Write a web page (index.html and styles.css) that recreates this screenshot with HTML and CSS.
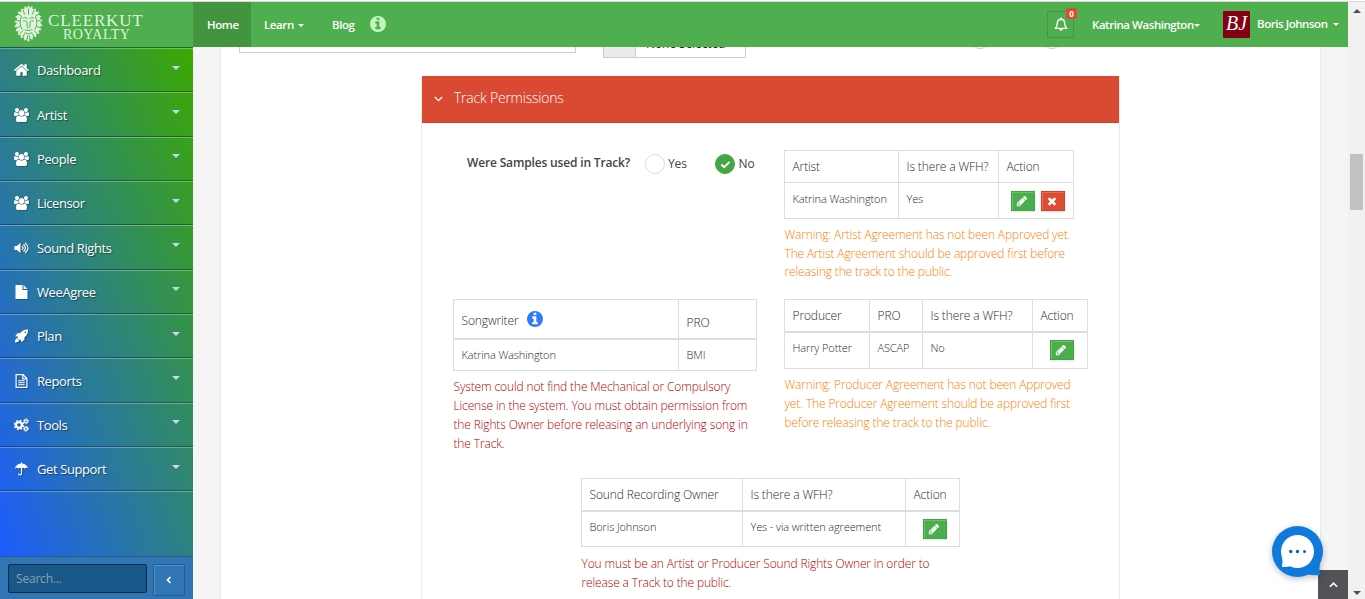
FILE: index.html
```html
<!DOCTYPE html>
<html lang="en">
<head>
<meta charset="utf-8">
<title>Cleerkut Royalty</title>
<link rel="stylesheet" href="styles.css">
</head>
<body>
<svg class="defs" width="0" height="0">
  <symbol id="home" viewBox="70 200 1650 1400"><path d="M1472 992v480q0 26-19 45t-45 19h-384v-384h-256v384h-384q-26 0-45-19t-19-45v-480q0-1 .5-3t.5-3l575-474 575 474q1 2 1 6zm223-69l-62 74q-8 9-21 11h-3q-13 0-21-7l-692-577-692 577q-12 8-24 7-13-2-21-11l-62-74q-8-10-7-23.5t11-21.5l719-599q32-26 76-26t76 26l244 204v-195q0-14 9-23t23-9h192q14 0 23 9t9 23v408l219 182q10 8 11 21.5t-7 23.5z"/></symbol>
  <symbol id="users" viewBox="0 0 1920 1792"><path d="M593 896q-162 5-265 128h-134q-82 0-138-40.5t-56-118.5q0-353 124-353 6 0 43.5 21t97.5 42.5 119 21.5q67 0 133-23-5 37-5 66 0 139 81 256zm1071 637q0 120-73 189.5t-194 69.5h-874q-121 0-194-69.5t-73-189.5q0-53 3.5-103.5t14-109 26.5-108.5 43-97.5 62-81 85.5-53.5 111.5-20q10 0 43 21.5t73 48 107 48 135 21.5 135-21.5 107-48 73-48 43-21.5q61 0 111.5 20t85.5 53.5 62 81 43 97.5 26.5 108.5 14 109 3.5 103.5zm-1024-1277q0 106-75 181t-181 75-181-75-75-181 75-181 181-75 181 75 75 181zm704 384q0 159-112.5 271.5t-271.5 112.5-271.5-112.5-112.5-271.5 112.5-271.5 271.5-112.5 271.5 112.5 112.5 271.5zm576 225q0 78-56 118.5t-138 40.5h-134q-103-123-265-128 81-117 81-256 0-29-5-66 66 23 133 23 59 0 119-21.5t97.5-42.5 43.5-21q124 0 124 353zm-128-609q0 106-75 181t-181 75-181-75-75-181 75-181 181-75 181 75 75 181z"/></symbol>
  <symbol id="volume" viewBox="0 0 14 14"><path d="M0 5h2.300L6 2v10L2.300 9H0z"/><path d="M7.500 5.200q2 1.800 0 3.600M9 3.500q4 3.500 0 7M10.500 1.900q6 5.100 0 10.200" fill="none" stroke="currentColor" stroke-width="1.200"/></symbol>
  <symbol id="file" viewBox="0 0 14 14"><path d="M1 .6Q1 0 1.600 0H8v4.400q0 .6.600.6H13v8.400q0 .6-.6.6H1.600Q1 14 1 13.400zM9 .1l3.900 3.900H9z"/></symbol>
  <symbol id="filetext" viewBox="0 0 14 14"><path d="M1.600.6H8.500l3.900 3.900v8.900H1.600zM8.300.8v4h4" fill="none" stroke="currentColor" stroke-width="1.200"/><path d="M3.800 6.300h6.400v1H3.800zm0 2h6.400v1H3.800zm0 2h6.400v1H3.800z"/></symbol>
  <symbol id="rocket" viewBox="0 0 14 14"><path fill-rule="evenodd" d="M13.500.500Q9-.1 5.800 4L3 4.200 0.700 7.300l2.900.2-.8 1.300 2.400 2.400 1.300-.8.200 2.900 3.100-2.300.2-2.800Q14.100 5 13.500.500zM10.700 2.500a.8.800 0 1 1 0 1.600.8.800 0 1 1 0-1.600zM2.500 9.200Q.5 10 .4 13.600 4 13.500 4.800 11.500z"/></symbol>
  <symbol id="cogs" viewBox="0 0 15 14"><g fill="none" stroke="currentColor"><circle cx="5" cy="7" r="2.900" stroke-width="2.200"/><circle cx="5" cy="7" r="4.500" stroke-width="1.400" stroke-dasharray="2 1.530"/><circle cx="12" cy="3.300" r="1.500" stroke-width="1.300"/><circle cx="12" cy="3.300" r="2.500" stroke-width=".9" stroke-dasharray="1.200 .76"/><circle cx="12" cy="10.800" r="1.500" stroke-width="1.300"/><circle cx="12" cy="10.800" r="2.500" stroke-width=".9" stroke-dasharray="1.200 .76"/></g></symbol>
  <symbol id="umbrella" viewBox="0 0 14 14"><path d="M6.500 1.500V.8q0-.5.5-.5t.5.500v.7q4.800.5 6.200 5.200-2-1.800-3.500 0Q8.600 5 7 6.700 5.400 5 3.800 6.700q-1.500-1.800-3.500 0Q1.700 2 6.500 1.500z"/><path d="M7 6v5.300q0 1.700-1.500 1.700T4 11.400" fill="none" stroke="currentColor" stroke-width="1.200"/></symbol>
  <symbol id="info" viewBox="128 128 1536 1536"><path d="M1152 1376v-160q0-14-9-23t-23-9h-96v-512q0-14-9-23t-23-9h-320q-14 0-23 9t-9 23v160q0 14 9 23t23 9h96v320h-96q-14 0-23 9t-9 23v160q0 14 9 23t23 9h448q14 0 23-9t9-23zm-128-896v-160q0-14-9-23t-23-9h-192q-14 0-23 9t-9 23v160q0 14 9 23t23 9h192q14 0 23-9t9-23zm640 416q0 209-103 385.5t-279.5 279.5-385.5 103-385.5-103-279.5-279.5-103-385.5 103-385.5 279.5-279.5 385.5-103 385.5 103 279.5 279.5 103 385.5z"/></symbol>
  <symbol id="pencil" viewBox="0 0 1792 1792"><path d="M491 1536l91-91-235-235-91 91v107h128v128h107zm523-928q0-22-22-22-10 0-17 7l-542 542q-7 7-7 17 0 22 22 22 10 0 17-7l542-542q7-7 7-17zm-54-192l416 416-832 832h-416v-416zm683 96q0 53-37 90l-166 166-416-416 166-165q36-38 90-38 53 0 91 38l235 234q37 39 37 91z"/></symbol>
  <symbol id="times" viewBox="0 0 1792 1792"><path d="M1490 1322q0 40-28 68l-136 136q-28 28-68 28t-68-28l-294-294-294 294q-28 28-68 28t-68-28l-136-136q-28-28-28-68t28-68l294-294-294-294q-28-28-28-68t28-68l136-136q28-28 68-28t68 28l294 294 294-294q28-28 68-28t68 28l136 136q28 28 28 68t-28 68l-294 294 294 294q28 28 28 68z"/></symbol>
</svg>
<div class="page">
  <div class="app">
    <header class="topbar">
      <a class="brand">
        <svg class="lion" viewBox="0 0 32 40">
          <path fill="currentColor" d="M16 0l1.500 3 2.500-2 .5 3.500L24 4l-.5 3 4 0-1.500 3 4 2-2.500 1.500L31 17l-3 1 3 4-3 .5 1.500 4-3 0 1 4-3-.5-.5 4-3-1-1 3.500-2-1L16 39l-2-2.500-2 1-1-3.500-3 1-.5-4-3 .5 1-4-3 0 1.500-4-3-.5 3-4-3-1 3.500-3.500L2 12l4-2-1.500-3 4 0L8 4l3.500.5L12 1l2.500 2z"/>
          <g fill="none" stroke="#4fae4e" stroke-width="1">
            <path d="M10 14q2.500-2 5 .5M22 14q-2.500-2-5 .5M10.500 17q2.500-1.500 4 .8M21.500 17q-2.500-1.500-4 .8M14.500 18v5l1.500 1.500 1.500-1.500v-5M12 26q4 2 8 0M12 29q4 3 8 0M8.500 12q-3 8 1 14M23.500 12q3 8-1 14M4 9l5 3M28 9l-5 3M3 16l4 1M29 16l-4 1M4 24l4-2M28 24l-4-2M7 30l3-3M25 30l-3-3M10 5l2 5M22 5l-2 5M16 4v6M10 34l2-4M22 34l-2-4M14.500 37l.5-5M17.500 37l-.5-5"/>
          </g>
        </svg>
        <span class="brand-text"><span class="b1">CLEERKUT</span><span class="b2">ROYALTY</span></span>
      </a>
      <nav class="nav">
        <a class="nav-item active">Home</a>
        <a class="nav-item">Learn <i class="caret"></i></a>
        <a class="nav-item">Blog</a>
        <svg class="nav-info"><use href="#info"/></svg>
      </nav>
      <div class="account">
        <span class="bell">
          <svg viewBox="0 0 14 15"><path d="M1.200 11.400Q3.400 9.300 3.400 5.800 3.500 2.500 7 2.300q3.500.2 3.600 3.500 0 3.500 2.200 5.600z" fill="none" stroke="#fff" stroke-width="1.400" stroke-linejoin="round"/><path d="M6.300.6h1.400v2H6.300zM5.200 12h3.600Q8.600 13.800 7 13.800T5.200 12z" fill="#fff"/></svg>
          <span class="badge">0</span>
        </span>
        <a class="user1">Katrina Washington<i class="caret"></i></a>
        <span class="avatar">BJ</span>
        <a class="user2">Boris Johnson <i class="caret"></i></a>
      </div>
    </header>
    <div class="columns">
      <aside class="sidebar">
        <ul class="menu">
          <li><svg><use href="#home"/></svg><span>Dashboard</span><i class="caret"></i></li>
          <li><svg><use href="#users"/></svg><span>Artist</span><i class="caret"></i></li>
          <li><svg><use href="#users"/></svg><span>People</span><i class="caret"></i></li>
          <li><svg><use href="#users"/></svg><span>Licensor</span><i class="caret"></i></li>
          <li><svg><use href="#volume"/></svg><span>Sound Rights</span><i class="caret"></i></li>
          <li><svg><use href="#file"/></svg><span>WeeAgree</span><i class="caret"></i></li>
          <li><svg><use href="#rocket"/></svg><span>Plan</span><i class="caret"></i></li>
          <li><svg><use href="#filetext"/></svg><span>Reports</span><i class="caret"></i></li>
          <li><svg><use href="#cogs"/></svg><span>Tools</span><i class="caret"></i></li>
          <li><svg><use href="#umbrella"/></svg><span>Get Support</span><i class="caret"></i></li>
        </ul>
        <div class="side-foot">
          <div class="search">Search...</div>
          <div class="collapse"><svg viewBox="0 0 6 8"><path d="M4.500 1L1.500 4l3 3" fill="none" stroke="#fff" stroke-width="1.700"/></svg></div>
        </div>
      </aside>
      <main class="content">
        <div class="fields">
          <div class="field-input"></div>
          <div class="field-select"><span class="addon"></span><span class="value">None Selected</span></div>
          <span class="mini-radio first"></span><span class="mini-radio"></span>
        </div>
        <section class="card">
          <h2 class="card-head"><svg viewBox="0 0 9 6"><path d="M.8 1l3.700 3.700L8.200 1" fill="none" stroke="#fff" stroke-width="1.300"/></svg><span>Track Permissions</span></h2>
          <div class="card-body">
            <div class="question">
              <span class="q-label">Were Samples used in Track?</span>
              <label class="opt"><span class="radio"></span>Yes</label>
              <label class="opt no"><span class="radio on"><svg viewBox="0 0 12 10"><path d="M1.500 5l3 3 6-6" fill="none" stroke="#fff" stroke-width="2"/></svg></span>No</label>
            </div>
            <div class="block">
              <table class="grid t-artist">
                <colgroup><col class="w114"><col class="w100"><col class="w75"></colgroup>
                <tr><th>Artist</th><th>Is there a WFH?</th><th>Action</th></tr>
                <tr><td>Katrina Washington</td><td>Yes</td><td class="act two"><span class="btn"><svg><use href="#pencil"/></svg></span><span class="btn red"><svg><use href="#times"/></svg></span></td></tr>
              </table>
              <p class="note warn">Warning: Artist Agreement has not been Approved yet.<br>The Artist Agreement should be approved first before<br>releasing the track to the public.</p>
            </div>
            <div class="block">
              <table class="grid thick t-song">
                <colgroup><col class="w225"><col class="w78"></colgroup>
                <tr><th class="mid">Songwriter <svg class="th-info"><use href="#info"/></svg></th><th class="low">PRO</th></tr>
                <tr><td>Katrina Washington</td><td>BMI</td></tr>
              </table>
              <p class="note error tight">System could not find the Mechanical or Compulsory<br>License in the system. You must obtain permission from<br>the Rights Owner before releasing an underlying song in<br>the Track.</p>
            </div>
            <div class="block">
              <table class="grid thick t-prod">
                <colgroup><col class="w85"><col class="w53"><col class="w110"><col class="w55"></colgroup>
                <tr><th>Producer</th><th>PRO</th><th>Is there a WFH?</th><th>Action</th></tr>
                <tr><td>Harry Potter</td><td>ASCAP</td><td>No</td><td class="act"><span class="btn"><svg><use href="#pencil"/></svg></span></td></tr>
              </table>
              <p class="note warn tight">Warning: Producer Agreement has not been Approved<br>yet. The Producer Agreement should be approved first<br>before releasing the track to the public.</p>
            </div>
            <div class="block wide">
              <table class="grid thick t-sound">
                <colgroup><col class="w161"><col class="w163"><col class="w54"></colgroup>
                <tr><th>Sound Recording Owner</th><th>Is there a WFH?</th><th>Action</th></tr>
                <tr><td>Boris Johnson</td><td>Yes - via written agreement</td><td class="act"><span class="btn"><svg><use href="#pencil"/></svg></span></td></tr>
              </table>
              <p class="note error">You must be an Artist or Producer Sound Rights Owner in order to<br>release a Track to the public.</p>
            </div>
          </div>
        </section>
      </main>
    </div>
  </div>
  <div class="scrollbar"><i class="up"></i><i class="thumb"></i><i class="down"></i></div>
</div>
<div class="to-top"><svg viewBox="0 0 10 6"><path d="M1 5l4-4 4 4" fill="none" stroke="#fff" stroke-width="1.800"/></svg></div>
<svg class="chat" viewBox="0 0 60 60"><circle cx="29.500" cy="29.500" r="25.500" fill="#107adc"/><path d="M52 40q-1 7 0 13-7 1-13-1z" fill="#107adc"/><circle cx="29.500" cy="29.500" r="16.500" fill="#fff"/><path d="M14 34q1 6 0 11 6 0 10-1z" fill="#fff"/><g fill="#0e63ad"><circle cx="22.800" cy="29.500" r="1.700"/><circle cx="29.500" cy="29.500" r="1.700"/><circle cx="36.500" cy="29.500" r="1.500"/></g></svg>
</body>
</html>
```
FILE: styles.css
```css
* { box-sizing: border-box; }
body { margin: 0; height: 599px; overflow: hidden; background: #fff; font-family: "Open Sans", sans-serif; font-size: 13px; color: #444; }
.defs { position: absolute; }
svg { fill: currentColor; flex: none; display: block; }
.page { display: flex; height: 599px; padding-top: 2px; background: linear-gradient(#fff 0 1px, #d9d9d9 1px 2px) 0 0 / 100% 2px no-repeat; }
.app { width: 1348px; display: flex; flex-direction: column; }

.topbar { height: 45px; flex: none; display: flex; background: #4fae4e; color: #fff; position: relative; z-index: 2; font-size: 12px; font-weight: 600; }
.brand { width: 193px; display: flex; padding: 3px 0 0 12px; color: #dff3dc; font-family: "Liberation Serif", serif; font-weight: 400; }
.lion { width: 33px; height: 38px; }
.brand-text { display: flex; flex-direction: column; padding: 8px 0 0 3px; }
.b1 { font-size: 17px; line-height: 16px; letter-spacing: .85px; white-space: nowrap; }
.b2 { font-size: 14px; line-height: 12px; letter-spacing: .45px; padding-left: 15px; }
.nav { display: flex; flex: 1; line-height: 46px; font-size: 11.500px; letter-spacing: -.4px; }
.nav-item { width: 58px; padding-left: 14px; white-space: nowrap; }
.nav-item.active { background: #43943f; }
.nav-item:nth-child(2) { width: 67px; padding-left: 13px; }
.nav-item:nth-child(3) { width: 52px; }
.nav-item .caret { margin-left: 2px; }
.nav-info { width: 16px; height: 16px; margin-top: 14px; color: #c1f7bd; }
.caret { display: inline-block; border: 3px solid transparent; border-top-color: currentColor; border-bottom: 0; vertical-align: 2px; }
.account { display: flex; }
.bell { width: 27px; height: 27px; margin-top: 9px; border: 1px solid #419841; position: relative; padding: 5px 6px; }
.bell svg { width: 14px; height: 15px; }
.badge { position: absolute; left: 18px; top: -4px; width: 11px; height: 11px; border-radius: 2px; background: #e04b34; font-size: 8px; line-height: 11px; font-weight: 700; text-align: center; }
.user1 { margin-left: 18px; width: 131px; line-height: 46px; white-space: nowrap; letter-spacing: -.45px; font-size: 11.500px; }
.user2 { margin-left: 7px; width: 91px; line-height: 44px; white-space: nowrap; font-size: 11.500px; letter-spacing: -.45px; }
.user2 .caret { margin-left: 3px; }
.avatar { width: 27px; height: 27px; margin-top: 9px; border-radius: 1px; background: #850014; font: italic 400 20px/25px "Liberation Serif", serif; text-align: center; }

.columns { flex: 1; display: flex; min-height: 0; background: #f5f5f5; overflow: hidden; }
.sidebar { width: 193px; display: flex; flex-direction: column; }
.menu { margin: 0; padding: 0; list-style: none; flex: 1; background: linear-gradient(to top right, #1e5bff, #3ca900); }
.menu li { height: 44.350px; border-top: 1px solid rgba(0,40,50,.48); box-shadow: inset 0 1px rgba(255,255,255,.3); display: flex; align-items: center; padding: 1px 13px 0 14px; color: #fff; font-size: 13px; letter-spacing: -.4px; text-shadow: 1px 1px 1px rgba(0,0,0,.45); }
.menu li:last-child { height: 45.350px; border-bottom: 1px solid rgba(0,40,50,.48); box-shadow: inset 0 1px rgba(255,255,255,.3), 0 1px rgba(255,255,255,.3); }
.menu svg { width: 15px; height: 14px; margin-right: 8px; filter: drop-shadow(1px 1px 0 rgba(0,0,0,.25)); }
.menu .caret { margin: 0 0 5px auto; border-width: 4px; border-bottom: 0; border-top-color: #c9d3f5; }
.side-foot { height: 43px; background: #3176b4; border-top: 1px solid #265b87; display: flex; gap: 6px; padding: 7px 0 0 8px; }
.search { width: 139px; height: 29px; background: #1a5789; border: 1px solid #0c2b47; border-radius: 2px; padding-left: 7px; line-height: 28px; font-size: 12px; letter-spacing: -.2px; color: #8ea3ac; }
.collapse { width: 32px; height: 32px; border: 1px solid #255c8d; border-radius: 1px; box-shadow: inset 1px 1px rgba(255,255,255,.18); display: grid; place-items: center; }
.collapse svg { width: 6px; height: 8px; }

.content { width: 1101px; margin-left: 27px; background: #fff; border: solid #ebebeb; border-width: 0 1px; overflow: hidden; }
.fields { display: flex; align-items: flex-start; height: 58px; margin-top: -29px; padding-left: 18px; }
.field-input { width: 337px; height: 35px; border: 1px solid #ccc; }
.field-select { width: 143px; height: 40px; margin-left: 27px; border: 1px solid #ccc; display: flex; }
.addon { width: 32px; background: #ebebeb; border-right: 1px solid #ccc; }
.value { padding: 16px 0 0 10px; line-height: 18px; font-size: 12px; letter-spacing: -.1px; color: #222; white-space: nowrap; }
.mini-radio { width: 20px; height: 20px; border: 1px solid #ccc; border-radius: 50%; margin: 11px 0 0 52px; }
.mini-radio.first { margin-left: 224px; }

.card { width: 699px; margin-left: 200px; border: solid #ebebeb; border-width: 0 1px; }
.card-head { margin: 0; height: 47px; background: #da4931; border-bottom: 1px solid #cf402a; color: #fff; font-weight: 300; font-size: 14px; letter-spacing: -.22px; display: flex; align-items: center; padding-left: 12px; }
.card-head span { line-height: 18px; padding-bottom: 2px; }
.card-head svg { width: 9px; height: 6px; margin-right: 11px; }
.card-body { display: grid; grid-template-columns: 331px 304px; grid-template-rows: 149px 179px 149px; padding: 27px 0 0 31px; }
.question { display: flex; padding-left: 14px; height: 26px; line-height: 26px; }
.q-label { font-weight: 600; font-size: 12px; letter-spacing: -.16px; width: 177px; white-space: nowrap; }
.opt { display: flex; align-items: center; gap: 3px; width: 70px; font-size: 12px; padding-top: 2px; margin-left: 1px; position: relative; left: 1px; }
.radio { width: 20px; height: 20px; border: 1px solid #dcdad3; border-radius: 50%; display: grid; place-items: center; }
.radio.on { background: #46a646; border-color: #46a646; }
.radio svg { width: 11px; height: 9px; }

.grid { border-spacing: 0; border: solid #ddd; border-width: 1px 0 0 1px; table-layout: fixed; font-size: 12px; font-weight: 300; color: #2c2c2c; }
.grid th, .grid td { border: solid #ddd; border-width: 0 1px 1px 0; padding: 0 0 0 7.500px; text-align: left; font-weight: 300; white-space: nowrap; line-height: 16px; letter-spacing: -.12px; }
.grid th { height: 32px; font-size: 12px; }
.thick th { height: 33px; border-bottom-width: 2px; }
.grid td { height: 36px; font-size: 11px; vertical-align: top; padding-top: 8px; }
.grid.thick td { padding-top: 7px; }
.t-sound td { height: 35px; }
.t-song th { height: 40px; }
.grid.t-song td { height: 31px; }
.grid .low { padding-top: 8px; }
.grid .mid { padding-top: 2px; }
.t-artist { width: 290px; }
.t-song, .t-prod { width: 304px; }
.t-sound { width: 379px; }
.w114 { width: 114px; } .w100 { width: 100px; } .w75 { width: 75px; }
.w225 { width: 225px; } .w78 { width: 78px; }
.w85 { width: 85px; } .w53 { width: 53px; } .w110 { width: 110px; } .w55 { width: 55px; }
.w161 { width: 161px; } .w163 { width: 163px; } .w54 { width: 54px; }
.th-info { display: inline-block; width: 16px; height: 16px; margin-left: 5px; color: #2f7bff; vertical-align: -2px; }
.grid .act { padding-left: 17px; font-size: 0; }
.grid .two { padding-left: 12px; }
.btn { display: inline-grid; place-items: center; width: 24px; height: 20px; margin-right: 6px; background: #4aae4c; border: 1px solid #45a347; box-shadow: inset 1px 1px rgba(255,255,255,.2), 0 1px 2px rgba(0,0,0,.12); color: #fff; padding-right: 2px; }
.act .btn:last-child { margin-right: 0; }
.btn.red { background: #e04b34; border-color: #cb432e; }
.btn svg { width: 12px; height: 12px; }
.note { margin: 7px 0 0; font-size: 12px; line-height: 18.600px; font-weight: 300; letter-spacing: -.14px; white-space: nowrap; padding-left: .5px; }
.note.tight { line-height: 19px; margin-top: 6px; }
.warn { color: #ff8000; }
.error { color: #b80000; }
.wide { grid-column: 1 / 3; padding-left: 128px; }
.wide .note { line-height: 19px; }

.scrollbar { width: 17px; background: #f1f1f1; display: flex; flex-direction: column; align-items: center; }
.up { border: 4px solid transparent; border-bottom-color: #505050; border-top: 0; margin-top: 7px; }
.thumb { width: 13px; height: 56px; background: #c1c1c1; margin-top: 141px; }
.down { border: 4px solid transparent; border-top-color: #505050; border-bottom: 0; margin: auto 0 4px; }
.to-top { position: absolute; left: 1318px; top: 570px; width: 30px; height: 29px; background: #525257; display: grid; place-items: center; }
.to-top svg { width: 9px; height: 6px; }
.chat { position: absolute; left: 1268px; top: 522px; width: 60px; height: 60px; filter: drop-shadow(0 2px 3px rgba(0,0,0,.25)); }
```
